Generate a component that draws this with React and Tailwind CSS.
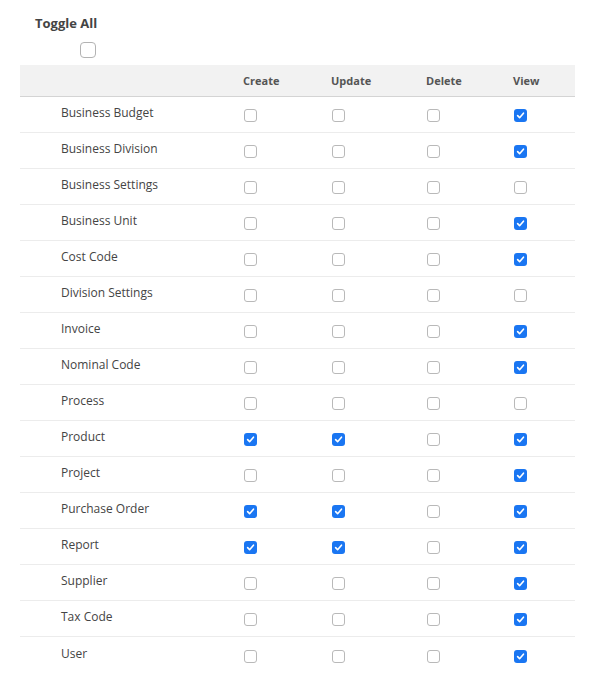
import React from "react";

const rows = [
  ["Business Budget", [0, 0, 0, 1]],
  ["Business Division", [0, 0, 0, 1]],
  ["Business Settings", [0, 0, 0, 0]],
  ["Business Unit", [0, 0, 0, 1]],
  ["Cost Code", [0, 0, 0, 1]],
  ["Division Settings", [0, 0, 0, 0]],
  ["Invoice", [0, 0, 0, 1]],
  ["Nominal Code", [0, 0, 0, 1]],
  ["Process", [0, 0, 0, 0]],
  ["Product", [1, 1, 0, 1]],
  ["Project", [0, 0, 0, 1]],
  ["Purchase Order", [1, 1, 0, 1]],
  ["Report", [1, 1, 0, 1]],
  ["Supplier", [0, 0, 0, 1]],
  ["Tax Code", [0, 0, 0, 1]],
  ["User", [0, 0, 0, 1]],
];

function Box({ checked }) {
  if (checked) {
    return (
      <span className="flex h-[13px] w-[13px] items-center justify-center rounded-[3px] bg-[#1a76f2]">
        <svg width="9" height="9" viewBox="0 0 10 10" fill="none">
          <path d="M1.8 5.2 L4 7.4 L8.3 2.4" stroke="white" strokeWidth="1.8" strokeLinecap="round" strokeLinejoin="round" />
        </svg>
      </span>
    );
  }
  return <span className="block h-[13px] w-[13px] rounded-[3px] border border-[#b9b9b9] bg-white" />;
}

export default function App() {
  return (
    <div className="min-h-[694px] bg-white px-[20px] pt-[14px] text-[#444]" style={{ fontFamily: '"Open Sans", sans-serif' }}>
      <div className="pl-[15px] text-[13px] font-bold leading-[18px] text-[#444]">Toggle All</div>
      <div className="ml-[60px] mt-[10px] h-[16px] w-[16px] rounded-[4px] border border-[#b3b3b3] bg-white" />
      <div className="mt-[7px] w-[555px]">
        <div className="grid h-[32px] grid-cols-[213px_88px_95px_87px_72px] items-center border-b border-[#d4d4d4] bg-[#f2f2f2] pt-[2px] text-[11px] font-bold text-[#555]">
          <div />
          <div className="pl-[10px]">Create</div>
          <div className="pl-[10px]">Update</div>
          <div className="pl-[10px]">Delete</div>
          <div className="pl-[10px]">View</div>
        </div>
        {rows.map(([label, vals], i) => (
          <div
            key={label}
            className={
              "grid h-[36px] grid-cols-[213px_88px_95px_87px_72px] items-center text-[12px] text-[#444] " +
              (i < rows.length - 1 ? "border-b border-[#ececec]" : "")
            }
          >
            <div className="pl-[41px] leading-none pb-[3px]">{label}</div>
            {vals.map((v, j) => (
              <div key={j} className="pl-[11px] pt-[2px]">
                <Box checked={!!v} />
              </div>
            ))}
          </div>
        ))}
      </div>
    </div>
  );
}
